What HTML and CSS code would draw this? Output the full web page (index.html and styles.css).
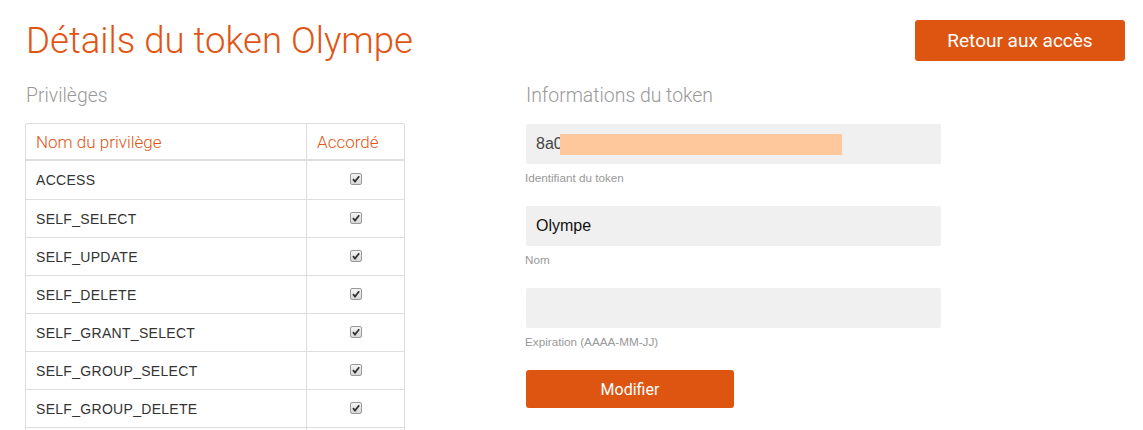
FILE: index.html
```html
<!DOCTYPE html>
<html lang="fr">
<head>
<meta charset="utf-8">
<title>Détails du token Olympe</title>
<link rel="stylesheet" href="styles.css">
</head>
<body>
<div class="page">
  <header class="top">
    <h1 class="title">Détails du token Olympe</h1>
    <a class="btn btn-back" href="#">Retour aux accès</a>
  </header>
  <div class="cols">
    <section class="left">
      <h2 class="section-title">Privilèges</h2>
      <table class="priv">
        <thead>
          <tr><th class="c-name">Nom du privilège</th><th class="c-ok">Accordé</th></tr>
        </thead>
        <tbody>
          <tr><td>ACCESS</td><td class="c-ok"><span class="cb"><svg viewBox="0 0 12 12" width="12" height="12"><path d="M3 6.2 L5 8.6 L9.2 3.2" fill="none" stroke="#333" stroke-width="1.8"/></svg></span></td></tr>
          <tr><td>SELF_SELECT</td><td class="c-ok"><span class="cb"><svg viewBox="0 0 12 12" width="12" height="12"><path d="M3 6.2 L5 8.6 L9.2 3.2" fill="none" stroke="#333" stroke-width="1.8"/></svg></span></td></tr>
          <tr><td>SELF_UPDATE</td><td class="c-ok"><span class="cb"><svg viewBox="0 0 12 12" width="12" height="12"><path d="M3 6.2 L5 8.6 L9.2 3.2" fill="none" stroke="#333" stroke-width="1.8"/></svg></span></td></tr>
          <tr><td>SELF_DELETE</td><td class="c-ok"><span class="cb"><svg viewBox="0 0 12 12" width="12" height="12"><path d="M3 6.2 L5 8.6 L9.2 3.2" fill="none" stroke="#333" stroke-width="1.8"/></svg></span></td></tr>
          <tr><td>SELF_GRANT_SELECT</td><td class="c-ok"><span class="cb"><svg viewBox="0 0 12 12" width="12" height="12"><path d="M3 6.2 L5 8.6 L9.2 3.2" fill="none" stroke="#333" stroke-width="1.8"/></svg></span></td></tr>
          <tr><td>SELF_GROUP_SELECT</td><td class="c-ok"><span class="cb"><svg viewBox="0 0 12 12" width="12" height="12"><path d="M3 6.2 L5 8.6 L9.2 3.2" fill="none" stroke="#333" stroke-width="1.8"/></svg></span></td></tr>
          <tr><td>SELF_GROUP_DELETE</td><td class="c-ok"><span class="cb"><svg viewBox="0 0 12 12" width="12" height="12"><path d="M3 6.2 L5 8.6 L9.2 3.2" fill="none" stroke="#333" stroke-width="1.8"/></svg></span></td></tr>
          <tr class="row-more"><td></td><td class="c-ok"></td></tr>
        </tbody>
      </table>
    </section>
    <section class="right">
      <h2 class="section-title section-title-form">Informations du token</h2>
      <form class="form">
        <div class="field">
          <div class="input"><span class="val-muted">8a0</span><span class="redact"></span></div>
          <div class="label">Identifiant du token</div>
        </div>
        <div class="field">
          <div class="input"><span class="val">Olympe</span></div>
          <div class="label">Nom</div>
        </div>
        <div class="field">
          <div class="input"></div>
          <div class="label">Expiration (AAAA-MM-JJ)</div>
        </div>
        <button type="button" class="btn btn-submit">Modifier</button>
      </form>
    </section>
  </div>
</div>
</body>
</html>
```
FILE: styles.css
```css
* { box-sizing: border-box; }
html, body { margin: 0; padding: 0; background: #fff; }
body { font-family: "Roboto", "Liberation Sans", sans-serif; color: #333; overflow: hidden; height: 430px; }

.page { padding: 0 18px 0 25px; }

.top { display: flex; justify-content: space-between; align-items: flex-start; }
.title {
  margin: 19px 0 0 1px;
  font-weight: 300;
  font-size: 36.6px;
  line-height: 44px;
  color: #e05514;
}
.btn {
  display: inline-flex; align-items: center; justify-content: center;
  background: #dd5511; color: #fff; border: 0; border-radius: 3px;
  text-decoration: none; font-family: "Roboto", "Liberation Sans", sans-serif;
  font-weight: 400;
}
.btn-back { margin-top: 20px; width: 210px; height: 41px; font-size: 19px; }

.cols { display: flex; margin-top: 22px; }
.left { width: 380px; }
.right { margin-left: 120px; width: 416px; }

.section-title {
  margin: 0 0 16px 1px;
  font-weight: 300;
  font-size: 19.4px;
  line-height: 22px;
  color: #999;
}
.section-title-form { margin-bottom: 17px; }

.priv {
  width: 380px;
  border-collapse: separate;
  border-spacing: 0;
  border: 1px solid #ddd;
  border-bottom: 0;
  border-radius: 3px 3px 0 0;
  font-family: "Liberation Sans", Arial, sans-serif;
  font-size: 14px;
}
.priv th {
  font-family: "Roboto", "Liberation Sans", sans-serif;
  font-weight: 300;
  font-size: 17px;
  color: #e05514;
  text-align: left;
  height: 37px;
  padding: 0 10px;
  border-bottom: 2px solid #ddd;
}
.priv td {
  height: 38px;
  padding: 0 10px;
  border-top: 1px solid #ddd;
  color: #333;
  letter-spacing: 0.3px;
}
.priv tbody tr:first-child td { border-top: 0; }
.priv .c-name { width: 280px; }
.priv .c-ok { border-left: 1px solid #ddd; text-align: center; }
.priv th.c-ok { text-align: left; }

.cb {
  display: inline-block; width: 12px; height: 12px;
  border: 1px solid #999; border-radius: 2px;
  background: linear-gradient(#f4f4f4, #d8d8d8);
  vertical-align: middle; position: relative; top: -2px;
}
.cb svg { display: block; margin: -1px 0 0 -1px; }

.form { display: flex; flex-direction: column; }
.field { margin-bottom: 21px; }
.input {
  height: 40px; width: 415px; margin-left: 1px;
  background: #f0f0f0; border-radius: 2px;
  display: flex; align-items: center; padding-left: 10px;
  font-family: "Liberation Sans", Arial, sans-serif; font-size: 16px;
}
.val-muted { color: #444; }
.val { color: #111; }
.redact { display: inline-block; width: 282px; height: 21px; background: #ffc89c; margin-left: -3px; margin-top: 1px; }
.label {
  margin-top: 7px;
  font-family: "Liberation Sans", Arial, sans-serif;
  font-size: 11.7px; line-height: 14px;
  color: #999;
}
.btn-submit { margin-left: 1px; width: 208px; height: 38px; font-size: 16px; }
```
